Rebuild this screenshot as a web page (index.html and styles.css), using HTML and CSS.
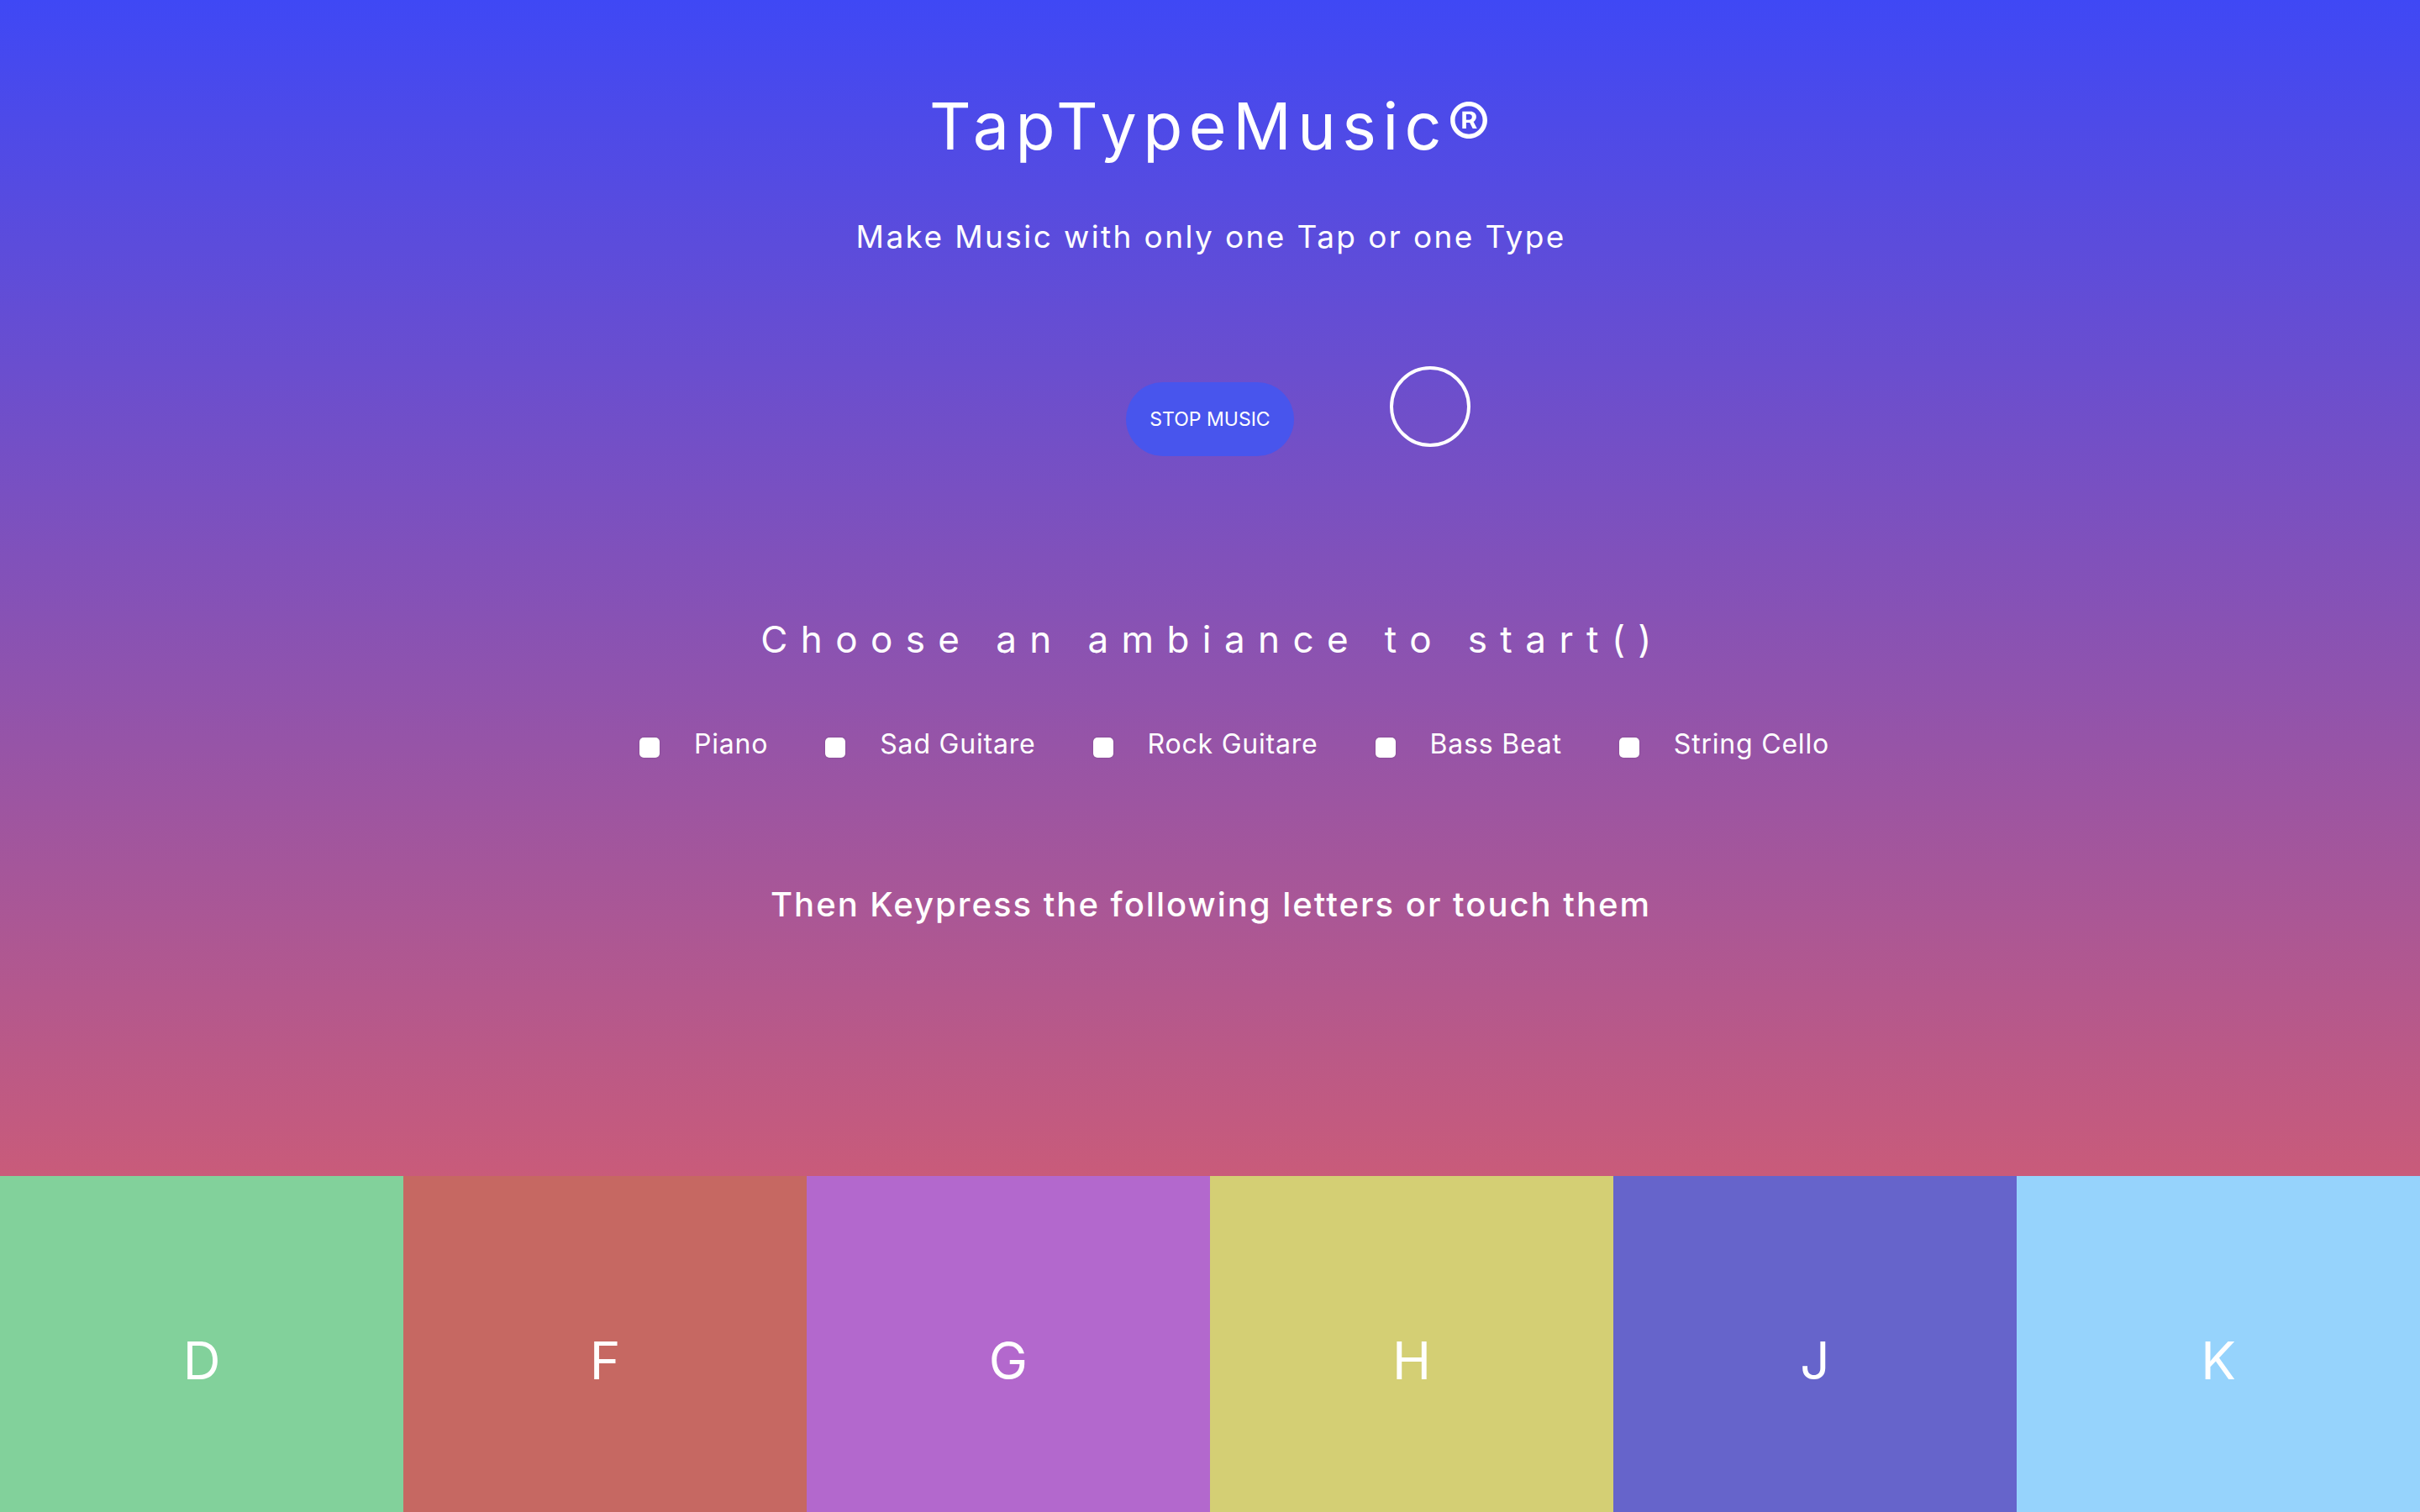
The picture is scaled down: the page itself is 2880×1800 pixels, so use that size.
FILE: index.html
```html
<!DOCTYPE html>
<html lang="en">
<head>
<meta charset="utf-8">
<title>TapTypeMusic</title>
<link rel="stylesheet" href="styles.css">
</head>
<body>
<main class="stage">
  <header class="hero">
    <h1 class="title">TapTypeMusic®</h1>
    <p class="tagline">Make Music with only one Tap or one Type</p>
  </header>
  <div class="controls">
    <button class="stop" type="button">STOP MUSIC</button>
    <span class="ring"></span>
  </div>
  <h2 class="prompt">Choose an ambiance to start()</h2>
  <div class="ambiances">
    <label class="ambiance"><input class="check" type="checkbox"><span class="name">Piano</span></label>
    <label class="ambiance"><input class="check" type="checkbox"><span class="name">Sad Guitare</span></label>
    <label class="ambiance"><input class="check" type="checkbox"><span class="name">Rock Guitare</span></label>
    <label class="ambiance"><input class="check" type="checkbox"><span class="name">Bass Beat</span></label>
    <label class="ambiance"><input class="check" type="checkbox"><span class="name">String Cello</span></label>
  </div>
  <p class="instruction">Then Keypress the following letters or touch them</p>
</main>
<section class="keys">
  <div class="key key-d">D</div>
  <div class="key key-f">F</div>
  <div class="key key-g">G</div>
  <div class="key key-h">H</div>
  <div class="key key-j">J</div>
  <div class="key key-k">K</div>
</section>
</body>
</html>
```
FILE: styles.css
```css
* { box-sizing: border-box; }
html, body { margin: 0; padding: 0; }
body {
  width: 2880px;
  height: 1800px;
  overflow: hidden;
  font-family: "Inter", "Open Sans", sans-serif;
  color: #ffffff;
  background: #c95b7a;
}
.stage {
  height: 1400px;
  padding-top: 100px;
  background: linear-gradient(180deg, #3f48f5 0%, #c95b7a 100%);
  display: flex;
  flex-direction: column;
  align-items: center;
}
.hero { display: flex; flex-direction: column; align-items: center; }
.title {
  margin: 0;
  font-size: 77px;
  font-weight: 400;
  line-height: 100px;
  letter-spacing: 7.5px;
  padding-left: 7.5px;
}
.tagline {
  margin: 57px 0 0;
  font-size: 37px;
  line-height: 50px;
  font-weight: 400;
  letter-spacing: 2.4px;
  padding-left: 2.4px;
}
.controls {
  margin-top: 129px;
  width: 100%;
  display: grid;
  grid-template-columns: 1fr auto 1fr;
  align-items: start;
}
.stop {
  grid-column: 2;
  margin-top: 19px;
  width: 200px;
  height: 88px;
  border: none;
  border-radius: 44px;
  background: #4855ed;
  color: #ffffff;
  font-family: "Inter", sans-serif;
  font-size: 23px;
  font-weight: 400;
  padding: 0;
}
.ring {
  grid-column: 3;
  justify-self: start;
  margin-left: 114px;
  width: 96px;
  height: 96px;
  border: 4px solid #ffffff;
  border-radius: 50%;
}
.prompt {
  margin: 188px 0 0;
  font-size: 44px;
  line-height: 60px;
  font-weight: 400;
  letter-spacing: 15.4px;
  padding-left: 6px;
}
.ambiances {
  margin-top: 75px;
  display: flex;
  justify-content: center;
  gap: 68px;
  padding-left: 58px;
}
.ambiance {
  display: flex;
  align-items: flex-start;
  gap: 41px;
}
.check {
  appearance: none;
  -webkit-appearance: none;
  margin: 12px 0 0;
  width: 24px;
  height: 24px;
  border-radius: 5px;
  background: #ffffff;
  box-shadow: 0 0 1.5px rgba(80, 60, 90, 0.6);
}
.name {
  font-size: 32px;
  line-height: 40px;
  letter-spacing: 0.8px;
}
.instruction {
  margin: 146px 0 0;
  font-size: 40px;
  line-height: 50px;
  font-weight: 500;
  letter-spacing: 2px;
  padding-left: 2px;
}
.keys {
  height: 400px;
  display: grid;
  grid-template-columns: repeat(6, 1fr);
}
.key {
  display: flex;
  justify-content: center;
  align-items: flex-start;
  padding-top: 180px;
  font-size: 62px;
  line-height: 80px;
  font-weight: 400;
}
.key-d { background: #82d19b; }
.key-f { background: #c66862; }
.key-g { background: #b368cd; }
.key-h { background: #d4cf74; }
.key-j { background: #6664cb; }
.key-k { background: #96d3fc; }
```
